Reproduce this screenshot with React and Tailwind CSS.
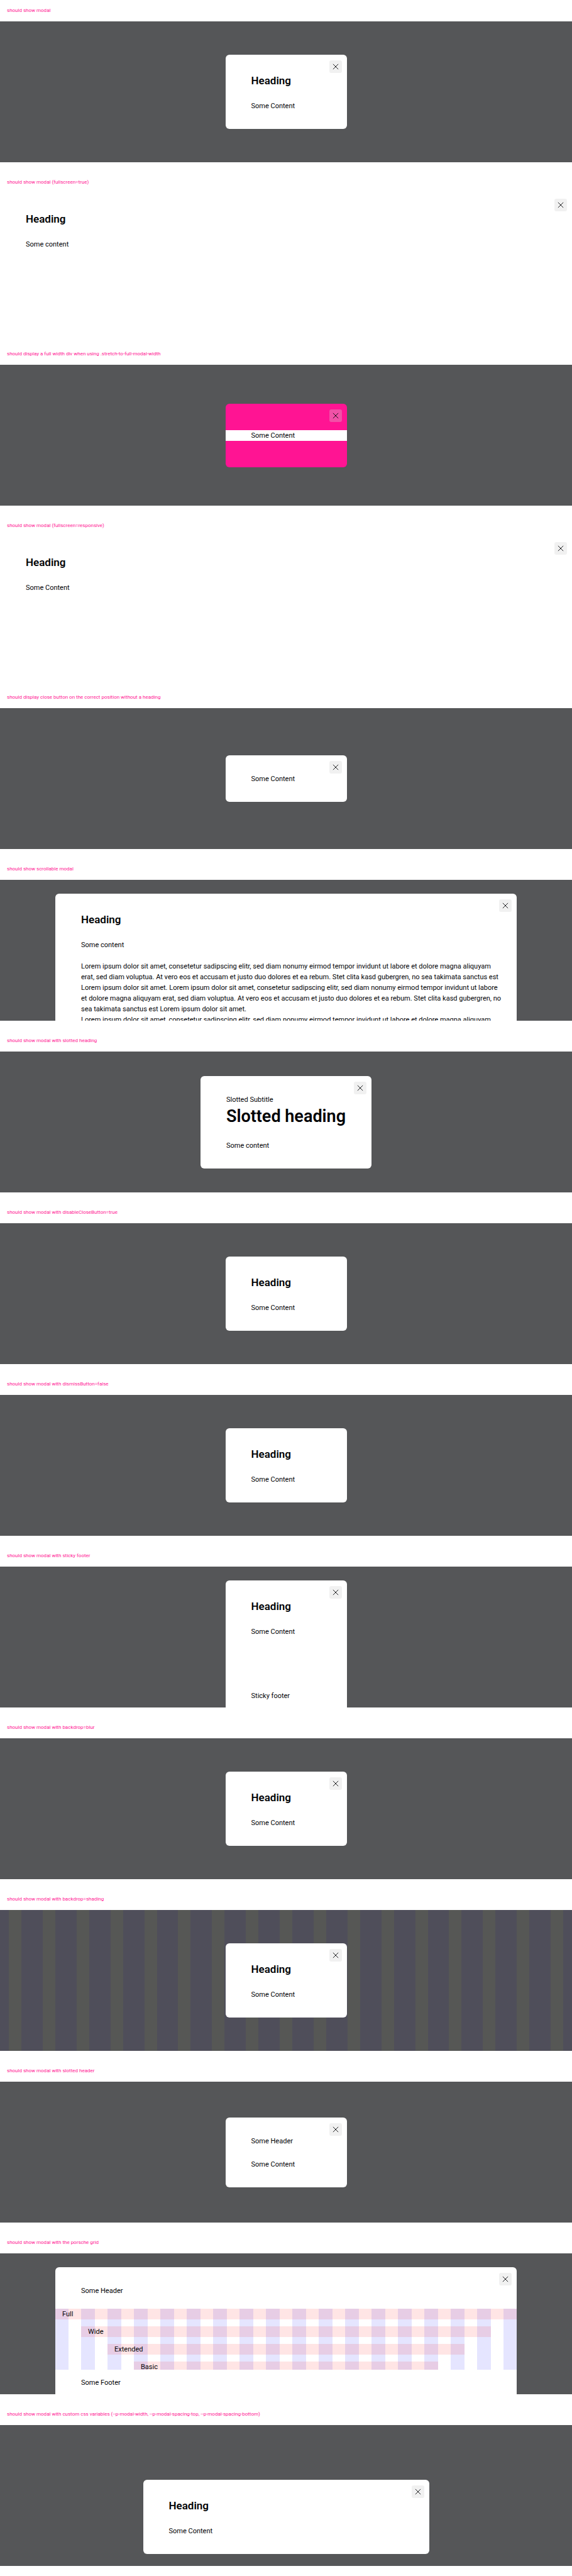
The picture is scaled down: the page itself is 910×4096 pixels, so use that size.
import React from "react";

function CloseButton() {
  return (
    <button
      type="button"
      aria-label="Dismiss modal"
      className="absolute right-2 top-[9px] z-10 size-5 rounded-[3px] bg-[rgba(211,211,211,0.32)]"
    >
      <svg viewBox="0 0 28 28" className="size-5" fill="none" stroke="#010205" strokeWidth="1.2" aria-hidden="true">
        <path d="M8.2 8.2l11.6 11.6M19.8 8.2L8.2 19.8" />
      </svg>
    </button>
  );
}

function Stage({ title, align = "items-center", color = "bg-[#555658]", backdrop, children }) {
  return (
    <section className="mb-[15px]">
      <h2 className="flex h-[34px] items-center px-[11px] text-[8px] leading-4 text-[#ff1493]">{title}</h2>
      <div className={`relative flex h-56 justify-center overflow-hidden ${align} ${color}`}>
        {backdrop}
        {children}
      </div>
    </section>
  );
}

function Modal({
  className = "w-[193px] rounded-md",
  padding = "px-[41px] pb-7 pt-[29px]",
  surface = "bg-white",
  closable = true,
  children,
}) {
  return (
    <div role="dialog" className={`relative flex flex-col ${surface} ${padding} ${className}`}>
      {closable && <CloseButton />}
      {children}
    </div>
  );
}

function Heading() {
  return <h3 className="mb-5 text-[17px] font-semibold leading-6">Heading</h3>;
}

function Basic({ title, closable, ...stage }) {
  return (
    <Stage title={title} {...stage}>
      <Modal closable={closable}>
        <Heading />
        <p>Some Content</p>
      </Modal>
    </Stage>
  );
}

function Fullscreen({ title, text }) {
  return (
    <Stage title={title} align="items-stretch" color="bg-white">
      <Modal className="w-full">
        <Heading />
        <p>{text}</p>
      </Modal>
    </Stage>
  );
}

function Columns({ grid, color }) {
  return (
    <div aria-hidden="true" className={`absolute inset-0 grid gap-x-5 ${grid}`}>
      {Array.from({ length: 18 }, (_, i) => (
        <div key={i} className={color} />
      ))}
    </div>
  );
}

function Lorem() {
  return (
    <p className="whitespace-nowrap">
      Lorem ipsum dolor sit amet, consetetur sadipscing elitr, sed diam nonumy eirmod tempor invidunt ut labore et dolore magna aliquyam
      <br />
      erat, sed diam voluptua. At vero eos et accusam et justo duo dolores et ea rebum. Stet clita kasd gubergren, no sea takimata sanctus est
      <br />
      Lorem ipsum dolor sit amet. Lorem ipsum dolor sit amet, consetetur sadipscing elitr, sed diam nonumy eirmod tempor invidunt ut labore
      <br />
      et dolore magna aliquyam erat, sed diam voluptua. At vero eos et accusam et justo duo dolores et ea rebum. Stet clita kasd gubergren, no
      <br />
      sea takimata sanctus est Lorem ipsum dolor sit amet.
    </p>
  );
}

const areas = [
  { name: "Full", span: "col-span-full" },
  { name: "Wide", span: "col-start-2 col-end-18" },
  { name: "Extended", span: "col-start-3 col-end-17" },
  { name: "Basic", span: "col-start-4 col-end-16" },
];

export default function App() {
  return (
    <main className="bg-white font-['Roboto',sans-serif] text-[11px] leading-[17px] text-[#010205]">
      <Basic title="should show modal" />
      <Fullscreen title="should show modal (fullscreen=true)" text="Some content" />

      <Stage title="should display a full width div when using .stretch-to-full-modal-width">
        <Modal className="w-[193px] rounded-md" surface="bg-[#ff1493]" padding="py-[42px]">
          <p className="bg-white px-[41px]">Some Content</p>
        </Modal>
      </Stage>

      <Fullscreen title="should show modal (fullscreen=responsive)" text="Some Content" />

      <Stage title="should display close button on the correct position without a heading">
        <Modal>
          <p>Some Content</p>
        </Modal>
      </Stage>

      <Stage title="should show scrollable modal" align="items-start">
        <Modal className="mx-[88px] mt-[22px] min-w-0 flex-1 rounded-t-md">
          <Heading />
          <p className="mb-[17px]">Some content</p>
          <Lorem />
          <Lorem />
        </Modal>
      </Stage>

      <Stage title="should show modal with slotted heading">
        <Modal className="rounded-md">
          <p>Slotted Subtitle</p>
          <h3 className="mb-5 text-[27px] font-semibold leading-9">Slotted heading</h3>
          <p>Some content</p>
        </Modal>
      </Stage>

      <Basic title="should show modal with disableCloseButton=true" closable={false} />
      <Basic title="should show modal with dismissButton=false" closable={false} />

      <Stage title="should show modal with sticky footer" align="items-stretch">
        <Modal className="mt-[22px] w-[193px] rounded-t-md" padding="px-[41px] pt-[29px]">
          <Heading />
          <p className="flex-1">Some Content</p>
          <footer className="pb-[10px] pt-3">Sticky footer</footer>
        </Modal>
      </Stage>

      <Basic title="should show modal with backdrop=blur" />
      <Basic
        title="should show modal with backdrop=shading"
        color="bg-[#565755]"
        backdrop={<Columns grid="grid-cols-[14px_repeat(16,minmax(0,1fr))_14px]" color="bg-[#4f4e5a]" />}
      />

      <Stage title="should show modal with slotted header">
        <Modal>
          <header className="mb-5">Some Header</header>
          <p>Some Content</p>
        </Modal>
      </Stage>

      <Stage title="should show modal with the porsche grid" align="items-stretch">
        <Modal className="mx-[88px] mt-[22px] min-w-0 flex-1 rounded-t-md" padding="pt-[29px]">
          <header className="mb-5 px-[41px]">Some Header</header>
          <div className="relative min-h-0 flex-1 overflow-hidden">
            <Columns grid="grid-cols-[21px_repeat(16,minmax(0,1fr))_21px]" color="bg-[#e5e5ff]" />
            <div className="relative grid grid-cols-[21px_repeat(16,minmax(0,1fr))_21px] gap-x-5 gap-y-[11px]">
              {areas.map((area) => (
                <div key={area.name} className={`bg-[rgba(255,0,0,0.1)] px-[11px] ${area.span}`}>
                  {area.name}
                </div>
              ))}
            </div>
          </div>
          <footer className="px-[41px] pb-[10px] pt-3">Some Footer</footer>
        </Modal>
      </Stage>

      <Stage
        title="should show modal with custom css variables (--p-modal-width, --p-modal-spacing-top, --p-modal-spacing-bottom)"
        align="items-end"
      >
        <Modal className="mb-[19px] w-1/2 rounded-md">
          <Heading />
          <p>Some Content</p>
        </Modal>
      </Stage>
    </main>
  );
}
